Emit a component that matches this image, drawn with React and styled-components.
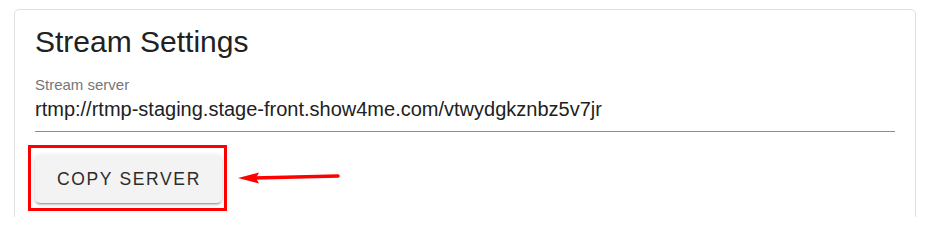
import styled, { createGlobalStyle } from 'styled-components';

const GlobalStyle = createGlobalStyle`
  html, body {
    margin: 0;
    padding: 0;
    background: #ffffff;
  }
  body {
    font-family: 'Liberation Sans', Arial, sans-serif;
  }
`;

const App = () => {
  return (
    <SPage>
      <GlobalStyle />
      <SCard>
        <STitle>Stream Settings</STitle>
        <SField>
          <SLabel>Stream server</SLabel>
          <SValue>rtmp://rtmp-staging.stage-front.show4me.com/vtwydgkznbz5v7jr</SValue>
        </SField>
        <SActionRow>
          <SHighlight>
            <SButton type='button'>Copy server</SButton>
          </SHighlight>
          <SArrow width='104' height='20' viewBox='0 0 104 20'>
            <line x1='18' y1='10' x2='102' y2='8' stroke='#ff0000' strokeWidth='3.5' strokeLinecap='round' />
            <polygon points='2,10 23,4.5 20,10 23,15.5' fill='#ff0000' />
          </SArrow>
        </SActionRow>
      </SCard>
    </SPage>
  );
};

export default App;

const SPage = styled.div`
  padding: 9px 14px 0;
  height: 217px;
  box-sizing: border-box;
  overflow: hidden;
`;

const SCard = styled.div`
  border: 1px solid #e0e0e0;
  border-radius: 5px;
  padding: 14px 20px 20px;
  background-color: #ffffff;
`;

const STitle = styled.h2`
  margin: 0;
  font-size: 30px;
  line-height: 36px;
  font-weight: 400;
  color: #212121;
`;

const SField = styled.div`
  margin-top: 16px;
  display: flex;
  flex-direction: column;
  border-bottom: 1px solid #8d8d8d;
`;

const SLabel = styled.span`
  font-size: 15px;
  line-height: 18px;
  color: #767676;
`;

const SValue = styled.span`
  margin-top: 3px;
  padding-bottom: 10px;
  font-size: 20px;
  line-height: 24px;
  color: #212121;
`;

const SActionRow = styled.div`
  display: flex;
  align-items: center;
  margin-top: 13px;
  margin-left: -7px;
`;

const SHighlight = styled.div`
  display: flex;
  border: 3px solid #ff0000;
  padding: 7px 2px 5px 4px;
`;

const SButton = styled.button`
  height: 48px;
  padding: 0 21px 0 22px;
  border: none;
  border-radius: 5px;
  background-color: #f3f3f3;
  box-shadow: 0px 3px 1px -2px rgba(0, 0, 0, 0.2),
    0px 2px 2px 0px rgba(0, 0, 0, 0.14), 0px 1px 5px 0px rgba(0, 0, 0, 0.12);
  font-family: 'Liberation Sans', Arial, sans-serif;
  font-size: 17.5px;
  letter-spacing: 1.65px;
  text-transform: uppercase;
  color: #2b2b2b;
  cursor: pointer;
`;

const SArrow = styled.svg`
  margin-left: 9px;
  display: block;
`;
